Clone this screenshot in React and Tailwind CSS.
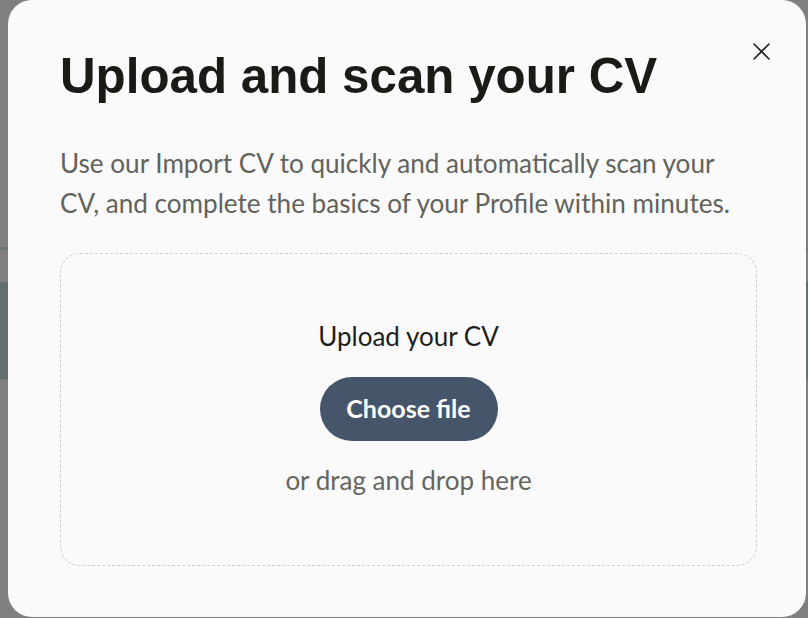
import React from "react";

export default function App() {
  return (
    <div className="relative w-[808px] h-[618px] overflow-hidden bg-[#7f7f7f]">
      {/* page content behind the overlay */}
      <div className="flex flex-col">
        <div className="h-[247px]" />
        <div className="h-[3px] bg-[#6d7575]" />
        <div className="h-[32px]" />
        <div className="h-[97px] bg-[#636e6e]" />
      </div>

      {/* modal */}
      <div
        className="absolute left-[8px] top-0 w-[798px] h-[617px] rounded-[24px] bg-[#fafafa] pl-[52px] pr-[36px] pt-[51px] flex flex-col"
        style={{ fontFamily: "Lato, 'Noto Sans', sans-serif" }}
      >
        <div className="flex items-start justify-between">
          <h1
            className="text-[49.3px] leading-[49.5px] font-bold text-[#1c1a17]"
            style={{ fontFamily: "'Liberation Sans', Arial, sans-serif" }}
          >
            Upload and scan your CV
          </h1>
          <button className="-mt-[8px] w-[17px] h-[17px] text-[#1f1f1f]">
            <svg viewBox="0 0 17 17" width="17" height="17" fill="none" stroke="currentColor" strokeWidth="1.6" strokeLinecap="round">
              <path d="M1 1 L16 16 M16 1 L1 16" />
            </svg>
          </button>
        </div>

        <p className="mt-[42px] text-[26.1px] leading-[40px] text-[#62625c] w-[690px]">
          Use our Import CV to quickly and automatically scan your CV, and complete the basics of your Profile within minutes.
        </p>

        <div className="mt-[30px] h-[313px] w-[697px] rounded-[20px] border border-dashed border-[#cfcfcf] flex flex-col items-center pt-[66px]">
          <div className="text-[26px] leading-[32px] text-[#1e1e1e]">Upload your CV</div>
          <button className="mt-[25px] w-[178px] h-[64px] rounded-full bg-[#46566a] text-white text-[25px] font-bold">
            Choose file
          </button>
          <div className="mt-[23px] text-[26px] leading-[32px] text-[#66665f]">or drag and drop here</div>
        </div>
      </div>
    </div>
  );
}
